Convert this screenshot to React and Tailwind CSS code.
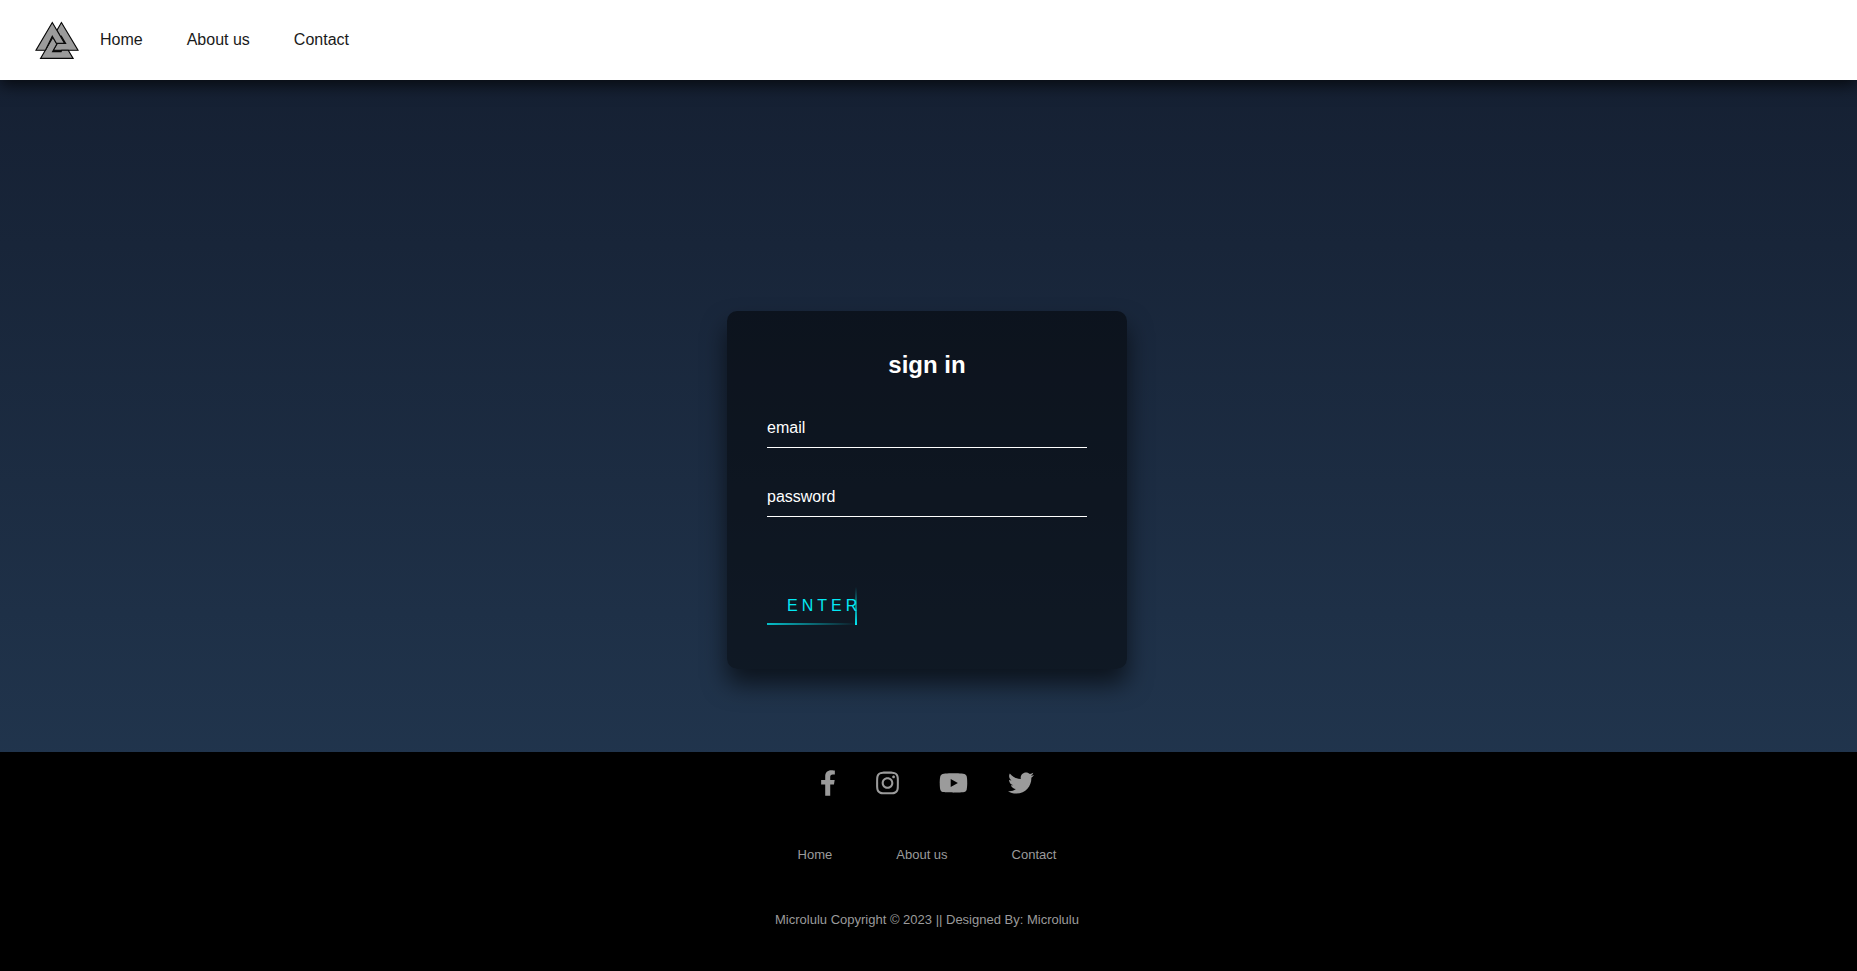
import { FaFacebookF, FaInstagram, FaYoutube, FaTwitter } from "react-icons/fa";

const links = ["Home", "About us", "Contact"];

const socials = [
  { label: "Facebook", Icon: FaFacebookF, size: "w-4" },
  { label: "Instagram", Icon: FaInstagram, size: "w-[23px]" },
  { label: "YouTube", Icon: FaYoutube, size: "w-[29px]" },
  { label: "Twitter", Icon: FaTwitter, size: "w-[26px]" },
];

// Three interlocked triangles; the dark silhouette shows through the gaps.
function Logo() {
  return (
    <svg viewBox="44 62 135 118" className="h-[39px] w-11" aria-hidden="true">
      <g fill="#0a0a0a">
        <path d="M97 66 L147 151 H47 Z" />
        <path d="M125 66 L176 151 H75 Z" />
        <path d="M111 91 L161 176 H61 Z" />
      </g>
      <g fill="#9b9b9b" stroke="#0a0a0a" strokeWidth="3.5">
        <path d="M125 66 L176 151 H100 L112 130 H138 L125 108 L123 111 L111 90 Z" />
        <path d="M61 176 L99 111 L111 132 L98 155 H124 L126 151 H146 L161 176 Z" />
        <path d="M97 66 L135 130 H110 L97 108 L76 151 H47 Z" />
      </g>
    </svg>
  );
}

function Field({ id, label, type }) {
  return (
    <div className="relative">
      <input
        id={id}
        type={type}
        className="mb-[30px] block h-[39px] w-full border-b border-white bg-transparent py-2 text-base text-white outline-none"
      />
      <label htmlFor={id} className="pointer-events-none absolute top-0 left-0 py-[10px] text-base leading-[18px] text-white">
        {label}
      </label>
    </div>
  );
}

export default function App() {
  return (
    <div className="flex min-h-screen flex-col bg-linear-to-b from-[#141e30] to-[#243b55] font-['Liberation_Sans',Arial,sans-serif]">
      <header className="flex h-20 items-center bg-white pl-[35px] shadow-[0_5px_15px_rgba(0,0,0,0.7)]">
        <a href="#home" aria-label="Microlulu">
          <Logo />
        </a>
        <nav className="ml-[21px] flex gap-11 text-base leading-5 text-[#1a1a1a]">
          {links.map((t) => (
            <a key={t} href="#">{t}</a>
          ))}
        </nav>
      </header>

      <main className="flex flex-1 flex-col items-center justify-end pr-[3px] pb-[83px]">
        <form className="w-[400px] rounded-[10px] bg-black/50 p-10 pb-11 shadow-[0_15px_25px_rgba(0,0,0,0.6)]">
          <h2 className="mb-[30px] text-center text-2xl leading-7 font-bold text-white">sign in</h2>
          <Field id="email" label="email" type="text" />
          <Field id="password" label="password" type="password" />
          <button
            type="button"
            className="relative mt-[70px] block h-[38px] w-[90px] pl-5 text-left text-base leading-[18px] tracking-[4px] whitespace-nowrap text-[#03e9f4] uppercase"
          >
            Enter
            <span className="absolute bottom-0 left-0 h-[2px] w-full bg-linear-to-l from-transparent to-[#03e9f4]/80" />
            <span className="absolute right-0 bottom-0 h-full w-[2px] bg-linear-to-b from-transparent to-[#03e9f4]" />
          </button>
        </form>
      </main>

      <footer className="flex flex-col items-center bg-black pt-[18px] pr-[3px] pb-[43px] text-[13px] leading-4 text-[#9b9b9b]">
        <div className="flex gap-10">
          {socials.map(({ label, Icon, size }) => (
            <a key={label} href="#" aria-label={label}>
              <Icon className={`h-[26px] ${size}`} />
            </a>
          ))}
        </div>
        <nav className="mt-[51px] flex gap-16">
          {links.map((t) => (
            <a key={t} href="#">{t}</a>
          ))}
        </nav>
        <p className="mt-[49px]">Microlulu Copyright © 2023 || Designed By: Microlulu</p>
      </footer>
    </div>
  );
}
